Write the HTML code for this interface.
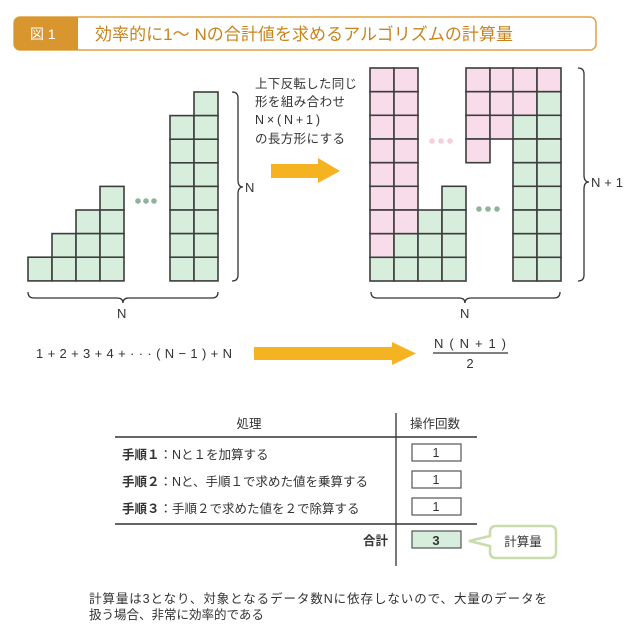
<!DOCTYPE html>
<html><head><meta charset="utf-8"><style>
body{margin:0;background:#fff;width:640px;height:633px;overflow:hidden;font-family:"Liberation Sans","Noto Sans CJK JP",sans-serif;color:#333}
svg{position:absolute;left:0;top:0}
text{font-family:"Liberation Sans","Noto Sans CJK JP",sans-serif;fill:#333}
</style></head><body>
<svg width="640" height="633" viewBox="0 0 640 633">
<defs>
<rect id="g" width="24" height="23.7" fill="#d6eedb" stroke="#3d3d3d" stroke-width="1.6"/>
<rect id="p" width="24" height="23.7" fill="#f9dcea" stroke="#3d3d3d" stroke-width="1.6"/>
</defs>
<rect x="14" y="17" width="582" height="33" rx="6" fill="#fff" stroke="#e0a440" stroke-width="1.5"/>
<path d="M20 17 H78 V50 H20 A6 6 0 0 1 14 44 V23 A6 6 0 0 1 20 17Z" fill="#d9962e"/>
<text x="30" y="39" font-size="14" style="fill:#fff">図 1</text>
<text x="95" y="40" font-size="17" textLength="418" style="fill:#c8841c">効率的に1～ Nの合計値を求めるアルゴリズムの計算量</text>

<use href="#g" x="28" y="257.2"/>
<use href="#g" x="52" y="233.6"/><use href="#g" x="52" y="257.2"/>
<use href="#g" x="76" y="210"/><use href="#g" x="76" y="233.6"/><use href="#g" x="76" y="257.2"/>
<use href="#g" x="100" y="186.4"/><use href="#g" x="100" y="210"/><use href="#g" x="100" y="233.6"/><use href="#g" x="100" y="257.2"/>
<use href="#g" x="170" y="115.6"/><use href="#g" x="170" y="139.2"/><use href="#g" x="170" y="162.8"/><use href="#g" x="170" y="186.4"/><use href="#g" x="170" y="210"/><use href="#g" x="170" y="233.6"/><use href="#g" x="170" y="257.2"/>
<use href="#g" x="194" y="92"/><use href="#g" x="194" y="115.6"/><use href="#g" x="194" y="139.2"/><use href="#g" x="194" y="162.8"/><use href="#g" x="194" y="186.4"/><use href="#g" x="194" y="210"/><use href="#g" x="194" y="233.6"/><use href="#g" x="194" y="257.2"/>
<g fill="#8fb39b"><circle cx="138" cy="201" r="2.8"/><circle cx="146" cy="201" r="2.8"/><circle cx="154" cy="201" r="2.8"/></g>
<path d="M232 92 Q238 92 238 98 V180 Q238 187 243 187 Q238 187 238 194 V275 Q238 281 232 281" fill="none" stroke="#333" stroke-width="1.3"/>
<text x="245" y="192" font-size="13">N</text>
<path d="M28 292 Q28 298 34 298 H117 Q123 298 123 303 Q123 298 129 298 H212 Q218 298 218 292" fill="none" stroke="#333" stroke-width="1.3"/>
<text x="117" y="318" font-size="13">N</text>

<g font-size="12.5"><text x="255" y="88" textLength="102">上下反転した同じ</text><text x="255" y="106" textLength="90">形を組み合わせ</text><text x="255" y="124" textLength="65">N×(N+1)</text><text x="255" y="143" textLength="90">の長方形にする</text></g>
<path d="M271 164 H318 V158 L340 171 L318 183 V178 H271Z" fill="#f5b322"/>

<g>
<use href="#p" x="370" y="68"/><use href="#p" x="370" y="91.7"/><use href="#p" x="370" y="115.3"/><use href="#p" x="370" y="139"/><use href="#p" x="370" y="162.7"/><use href="#p" x="370" y="186.3"/><use href="#p" x="370" y="210"/><use href="#p" x="370" y="233.7"/><use href="#g" x="370" y="257.3"/>
<use href="#p" x="394" y="68"/><use href="#p" x="394" y="91.7"/><use href="#p" x="394" y="115.3"/><use href="#p" x="394" y="139"/><use href="#p" x="394" y="162.7"/><use href="#p" x="394" y="186.3"/><use href="#p" x="394" y="210"/><use href="#g" x="394" y="233.7"/><use href="#g" x="394" y="257.3"/>
<use href="#g" x="418" y="210"/><use href="#g" x="418" y="233.7"/><use href="#g" x="418" y="257.3"/>
<use href="#g" x="442" y="186.3"/><use href="#g" x="442" y="210"/><use href="#g" x="442" y="233.7"/><use href="#g" x="442" y="257.3"/>
<use href="#p" x="466" y="68"/><use href="#p" x="466" y="91.7"/><use href="#p" x="466" y="115.3"/><use href="#p" x="466" y="139"/>
<use href="#p" x="490" y="68"/><use href="#p" x="490" y="91.7"/><use href="#p" x="490" y="115.3"/>
<use href="#p" x="513" y="68"/><use href="#p" x="513" y="91.7"/><use href="#g" x="513" y="115.3"/><use href="#g" x="513" y="139"/><use href="#g" x="513" y="162.7"/><use href="#g" x="513" y="186.3"/><use href="#g" x="513" y="210"/><use href="#g" x="513" y="233.7"/><use href="#g" x="513" y="257.3"/>
<use href="#p" x="537" y="68"/><use href="#g" x="537" y="91.7"/><use href="#g" x="537" y="115.3"/><use href="#g" x="537" y="139"/><use href="#g" x="537" y="162.7"/><use href="#g" x="537" y="186.3"/><use href="#g" x="537" y="210"/><use href="#g" x="537" y="233.7"/><use href="#g" x="537" y="257.3"/>
</g>
<g fill="#f3cfdf"><circle cx="432" cy="141" r="2.8"/><circle cx="441" cy="141" r="2.8"/><circle cx="450" cy="141" r="2.8"/></g>
<g fill="#8fb39b"><circle cx="479" cy="209" r="2.8"/><circle cx="488" cy="209" r="2.8"/><circle cx="497" cy="209" r="2.8"/></g>
<path d="M578 68 Q584 68 584 74 V175 Q584 182 589 182 Q584 182 584 189 V275 Q584 281 578 281" fill="none" stroke="#333" stroke-width="1.3"/>
<text x="591" y="187" font-size="13" textLength="32">N+1</text>
<path d="M371 292 Q371 298 377 298 H459 Q465 298 465 303 Q465 298 471 298 H554 Q560 298 560 292" fill="none" stroke="#333" stroke-width="1.3"/>
<text x="460" y="318" font-size="13">N</text>

<text x="36" y="358" font-size="13" textLength="196">1+2+3+4+···(N−1)+N</text>
<path d="M254 347 H392 V342 L416 353.5 L392 365 V360 H254Z" fill="#f5b322"/>
<text x="434" y="348" font-size="13" textLength="72">N(N+1)</text>
<line x1="433" y1="353" x2="508" y2="353" stroke="#333" stroke-width="1.2"/>
<text x="470" y="368" font-size="13" text-anchor="middle">2</text>

<text x="249" y="428" font-size="12.5" text-anchor="middle">処理</text>
<text x="435" y="428" font-size="12.5" text-anchor="middle">操作回数</text>
<line x1="396" y1="413" x2="396" y2="566" stroke="#333" stroke-width="1.3"/>
<line x1="115" y1="437" x2="477" y2="437" stroke="#333" stroke-width="1.5"/>
<line x1="115" y1="524" x2="477" y2="524" stroke="#333" stroke-width="1.5"/>
<g font-size="12.5">
<text x="122" y="459"><tspan font-weight="bold">手順１</tspan>：Nと１を加算する</text>
<text x="122" y="486"><tspan font-weight="bold">手順２</tspan>：Nと、手順１で求めた値を乗算する</text>
<text x="122" y="513"><tspan font-weight="bold">手順３</tspan>：手順２で求めた値を２で除算する</text>
<text x="388" y="545" font-weight="bold" text-anchor="end">合計</text>
</g>
<g fill="#fff" stroke="#555" stroke-width="1.2">
<rect x="412" y="444" width="49" height="17"/><rect x="412" y="471" width="49" height="17"/><rect x="412" y="498" width="49" height="17"/>
<rect x="412" y="531" width="49" height="17" fill="#d6eedb"/>
</g>
<g font-size="12.5" text-anchor="middle"><text x="436" y="457">1</text><text x="436" y="484">1</text><text x="436" y="511">1</text><text x="436" y="545" font-weight="bold" font-size="13">3</text></g>
<path d="M496 526 H550 Q556 526 556 532 V552 Q556 558 550 558 H496 Q490 558 490 552 V546 L469 541 L490 536 V532 Q490 526 496 526Z" fill="#fff" stroke="#c8dcae" stroke-width="2.5"/>
<text x="523" y="546" font-size="12.5" text-anchor="middle">計算量</text>

<text x="89" y="603" font-size="12.5" textLength="458">計算量は3となり、対象となるデータ数Nに依存しないので、大量のデータを</text>
<text x="89" y="619" font-size="12.5">扱う場合、非常に効率的である</text>
</svg>
</body></html>
